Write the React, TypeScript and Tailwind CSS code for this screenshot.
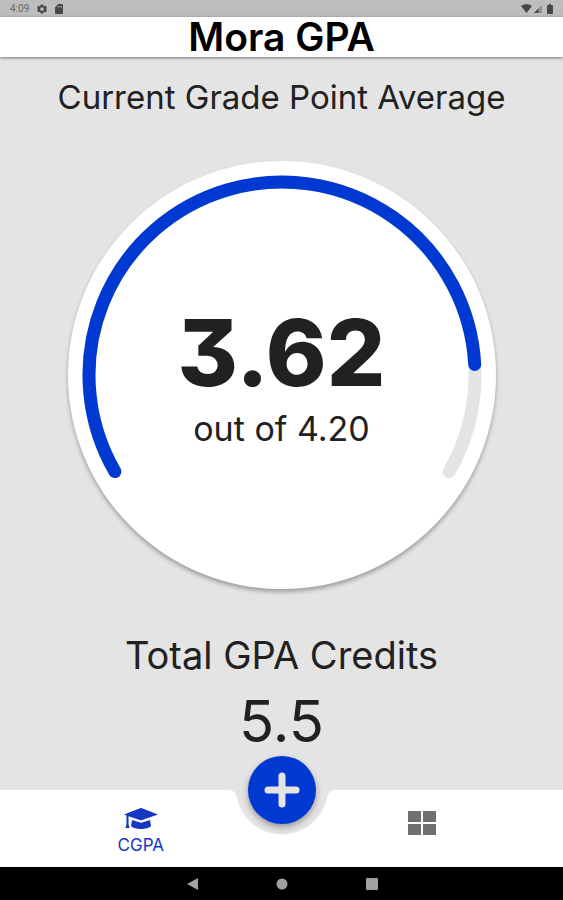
import React from 'react';

const CENTER = 214;
const RADIUS = 193;
const SWEEP = 240;
const START = 150;

function pointAt(degrees: number): string {
  const radians = (degrees * Math.PI) / 180;
  return `${CENTER + RADIUS * Math.cos(radians)} ${CENTER + RADIUS * Math.sin(radians)}`;
}

function arc(sweep: number): string {
  return `M${pointAt(START)} A${RADIUS} ${RADIUS} 0 ${sweep > 180 ? 1 : 0} 1 ${pointAt(START + sweep)}`;
}

function StatusBar() {
  return (
    <div className="flex h-[17px] shrink-0 items-center justify-between bg-[#bdbdbd] pr-2 pl-[10px] text-[#484848]">
      <div className="flex items-center gap-2">
        <span className="font-[Roboto,sans-serif] text-[10px] leading-4 text-[#686868]">4:09</span>
        <svg className="size-[10px]" viewBox="0 0 24 24" fill="currentColor" aria-hidden="true">
          <path fillRule="evenodd" d="M9 1h6l.7 3.2 2 1.2 3.1-1L24 9.600l-2.400 2.200v.8L24 14.600l-3.200 5.200-3.100-1-2 1.200L15 23H9l-.7-3-2-1.200-3.100 1L0 14.600l2.400-2v-.8L0 9.600l3.200-5.200 3.100 1 2-1.200zM12 7.500a4.500 4.500 0 1 0 0 9 4.500 4.500 0 0 0 0-9z" />
        </svg>
        <svg className="h-[10px] w-2" viewBox="0 0 18 20" fill="currentColor" preserveAspectRatio="none" aria-hidden="true">
          <path fillRule="evenodd" d="M7 0h9a2 2 0 0 1 2 2v16a2 2 0 0 1-2 2H2a2 2 0 0 1-2-2V7zM6 4v3h2V4zm4 0v3h2V4zm4 0v3h2V4z" />
        </svg>
      </div>
      <div className="flex items-center">
        <svg className="h-[9px] w-[11px]" viewBox="0 0 22 18" fill="currentColor" aria-hidden="true">
          <path d="M0 4C6-1 16-1 22 4L11 18z" />
        </svg>
        <svg className="ml-[2px] size-2" viewBox="0 0 16 16" fill="currentColor" aria-hidden="true">
          <path d="M16 0v16H0z" opacity=".4" />
          <path d="M9 7v9H0z" />
        </svg>
        <svg className="mr-[2px] ml-[5px] h-[10px] w-[6px]" viewBox="0 0 12 20" fill="currentColor" aria-hidden="true">
          <path d="M4 0h4v2h2a2 2 0 0 1 2 2v14a2 2 0 0 1-2 2H2a2 2 0 0 1-2-2V4a2 2 0 0 1 2-2h2z" />
        </svg>
      </div>
    </div>
  );
}

function Gauge({ value, max }: { value: number; max: number }) {
  return (
    <div className="relative aspect-square w-full max-w-[428px] rounded-full bg-white shadow-[0_3px_4px_rgba(0,0,0,0.3)]">
      <svg className="size-full" viewBox="0 0 428 428" fill="none" strokeWidth="13" strokeLinecap="round" aria-hidden="true">
        <path d={arc(SWEEP)} stroke="#e4e4e4" />
        <path d={arc((SWEEP * value) / max)} stroke="#0039d1" />
      </svg>
      <div className="absolute inset-0 flex flex-col items-center justify-center pt-2 text-[#212121]">
        <p className="text-[92px] leading-[92px] font-extrabold [font-feature-settings:'cv09']">{value.toFixed(2)}</p>
        <p className="mt-2 text-[34px] leading-[44px]">out of {max.toFixed(2)}</p>
      </div>
    </div>
  );
}

function BottomNav() {
  return (
    <nav className="relative flex h-[77px] shrink-0">
      <div className="absolute inset-0 flex" aria-hidden="true">
        <div className="flex-1 bg-white" />
        <svg className="h-full w-[108px]" viewBox="0 0 108 77" fill="#fff">
          <path d="M0 0C6 0 8 3 9 8A46 46 0 0 0 99 8C100 3 102 0 108 0V77H0z" />
        </svg>
        <div className="flex-1 bg-white" />
      </div>
      <button type="button" className="relative flex flex-1 flex-col items-center pt-[17px] text-[#1537c4]">
        <svg className="h-6 w-[34px]" viewBox="0 0 34 24" fill="currentColor" aria-hidden="true">
          <path d="M0 7.500 16 1.200q1-.4 2 0L34 7.500 18 13q-1 .4-2 0L4.500 9.300V17l1 4h-4l1-4V8.500z" />
          <path d="M8 13l8 2.600q1 .3 2 0L26 13l1 6c-3 4-17 4-20 0z" />
        </svg>
        <span className="text-[17px] leading-7">CGPA</span>
      </button>
      <button type="button" aria-label="Dashboard" className="relative flex flex-1 flex-col items-center pt-[21px] text-[#707070]">
        <svg className="h-6 w-7" viewBox="0 0 28 24" fill="currentColor" aria-hidden="true">
          <path d="M0 0h13v11H0zM15 0h13v11H15zM0 13h13v11H0zM15 13h13v11H15z" />
        </svg>
      </button>
      <button
        type="button"
        aria-label="Add"
        className="absolute -top-[34px] left-1/2 flex size-[68px] -translate-x-1/2 items-center justify-center rounded-full bg-[#0039d1] text-[#e4e4e4] shadow-[0_3px_6px_rgba(0,0,0,0.35)]"
      >
        <svg className="size-9" viewBox="0 0 36 36" stroke="currentColor" strokeWidth="7" strokeLinecap="round" aria-hidden="true">
          <path d="M18 4v28M4 18h28" />
        </svg>
      </button>
    </nav>
  );
}

function SystemBar() {
  return (
    <div className="flex h-[33px] shrink-0 items-center justify-center gap-[78px] bg-black text-[#a0a0a0]">
      <button type="button" aria-label="Back">
        <svg className="size-3" viewBox="0 0 12 12" fill="currentColor"><path d="M12 0v12L1 6z" /></svg>
      </button>
      <button type="button" aria-label="Home">
        <svg className="size-3" viewBox="0 0 12 12" fill="currentColor"><circle cx="6" cy="6" r="5.500" /></svg>
      </button>
      <button type="button" aria-label="Recent apps">
        <svg className="size-3" viewBox="0 0 12 12" fill="currentColor"><rect width="12" height="12" rx="1" /></svg>
      </button>
    </div>
  );
}

export default function App() {
  return (
    <div className="flex min-h-screen flex-col bg-[#e4e4e4] font-[Inter,Roboto,sans-serif] text-[#212121]">
      <StatusBar />
      <header className="flex h-10 shrink-0 items-center justify-center bg-white shadow-[0_1px_3px_rgba(0,0,0,0.5)]">
        <h1 className="text-[39px] leading-10 font-semibold text-black">Mora GPA</h1>
      </header>
      <main className="flex flex-1 flex-col items-center px-4 pt-5 pb-9">
        <h2 className="text-center text-[33px] leading-10">Current Grade Point Average</h2>
        <div className="mt-11 flex w-full justify-center">
          <Gauge value={3.62} max={4.2} />
        </div>
        <h2 className="mt-11 text-center text-[38px] leading-[44px]">Total GPA Credits</h2>
        <p className="mt-3 text-[58px] leading-[64px]">5.5</p>
      </main>
      <BottomNav />
      <SystemBar />
    </div>
  );
}
